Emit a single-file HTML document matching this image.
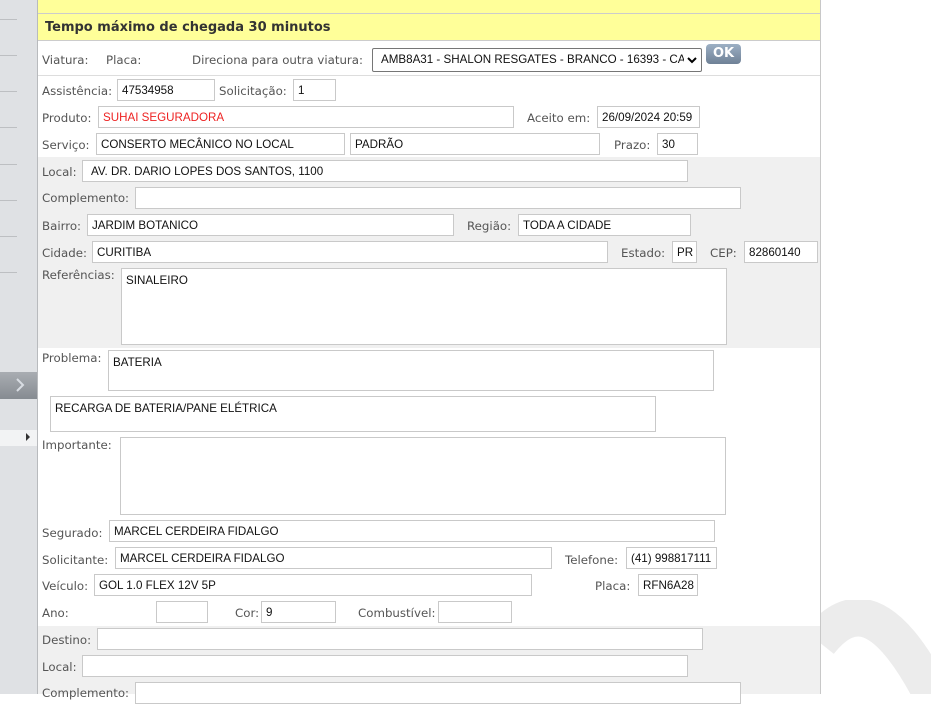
<!DOCTYPE html>
<html><head><meta charset="utf-8"><style>
*{margin:0;padding:0;box-sizing:border-box}
body{width:931px;height:694px;overflow:hidden;background:#fff;position:relative;font-family:"DejaVu Sans",Verdana,sans-serif;font-size:12px;color:#555}
.a{position:absolute}
.l{position:absolute;white-space:nowrap;line-height:14px;margin-top:1px;font-size:11.8px}
.i{position:absolute;background:#fff;border:1px solid #c9c9c9;font-family:"Liberation Sans",Tahoma,sans-serif;font-size:11.6px;color:#111;padding-left:4px;white-space:nowrap;overflow:hidden;height:22px;line-height:22px}
.t{line-height:16px;padding-top:4px}
.sl{position:absolute;left:0;width:17px;height:1px;background:#bdbfc2}
</style></head><body>
<div class="a" style="left:0;top:0;width:37px;height:694px;background:#dfe1e4"></div>
<div class="a" style="left:37px;top:0;width:1px;height:694px;background:#b8babd"></div>
<div class="sl" style="top:19px"></div><div class="sl" style="top:55px"></div><div class="sl" style="top:91px"></div><div class="sl" style="top:127px"></div><div class="sl" style="top:164px"></div><div class="sl" style="top:200px"></div><div class="sl" style="top:236px"></div><div class="sl" style="top:272px"></div>
<div class="a" style="left:0;top:372px;width:37px;height:27px;background:linear-gradient(#a9adb2,#868b91)"></div>
<svg class="a" style="left:14px;top:377px" width="12" height="16"><path d="M3 2 L9 8 L3 14" stroke="#d8dce2" stroke-width="2" fill="none"/></svg>
<div class="a" style="left:0;top:430px;width:37px;height:16px;background:#f2f3f4"></div>
<div class="a" style="left:26px;top:433px;width:0;height:0;border-left:4px solid #333;border-top:4px solid transparent;border-bottom:4px solid transparent"></div>

<div class="a" style="left:820px;top:0;width:1px;height:694px;background:#c8c8c8"></div>
<svg class="a" style="left:821px;top:600px" width="110" height="94"><path d="M-2 42 C30 2 65 5 112 96" stroke="#ececec" stroke-width="38" fill="none"/></svg>

<div class="a" style="left:38px;top:0;width:782px;height:13px;background:#ffff99"></div>
<div class="a" style="left:38px;top:13px;width:782px;height:1px;background:#ccc"></div>
<div class="a" style="left:38px;top:14px;width:782px;height:26px;background:#ffff99"></div>
<div class="l" style="left:45px;top:20px;font-weight:bold;font-size:13px;color:#333">Tempo máximo de chegada 30 minutos</div>
<div class="a" style="left:38px;top:40px;width:782px;height:1px;background:#ccc"></div>
<div class="l" style="left:42px;top:52px">Viatura:</div>
<div class="l" style="left:106px;top:52px">Placa:</div>
<div class="l" style="left:192px;top:52px">Direciona para outra viatura:</div>
<div class="i" style="left:372px;top:48px;width:330px;height:24px;line-height:22px;border-color:#767676;border-radius:2px;padding-left:8px">AMB8A31 - SHALON RESGATES - BRANCO - 16393 - CAI</div>
<div class="a" style="left:684px;top:51px;background:#fff;width:16px;height:18px"></div>
<svg class="a" style="left:686px;top:55px" width="12" height="10"><path d="M2 3 L6 7 L10 3" stroke="#000" stroke-width="2" fill="none"/></svg>
<div class="a" style="left:706px;top:44px;width:35px;height:20px;border-radius:4px;background:linear-gradient(#9cafc4,#6f8196);color:#fff;font-weight:bold;font-size:13px;text-align:center;line-height:20px">OK</div>
<div class="a" style="left:38px;top:75px;width:782px;height:1px;background:#ddd"></div>

<div class="l" style="left:42px;top:83px">Assistência:</div>
<div class="i" style="left:117px;top:79px;width:98px">47534958</div>
<div class="l" style="left:219px;top:83px">Solicitação:</div>
<div class="i" style="left:293px;top:79px;width:43px">1</div>

<div class="l" style="left:42px;top:110px">Produto:</div>
<div class="i" style="left:98px;top:106px;width:416px;color:#e22">SUHAI SEGURADORA</div>
<div class="l" style="left:527px;top:110px">Aceito em:</div>
<div class="i" style="left:597px;top:106px;width:103px">26/09/2024 20:59</div>

<div class="l" style="left:42px;top:137px">Serviço:</div>
<div class="i" style="left:96px;top:133px;width:249px">CONSERTO MECÂNICO NO LOCAL</div>
<div class="i" style="left:350px;top:133px;width:250px">PADRÃO</div>
<div class="l" style="left:614px;top:137px">Prazo:</div>
<div class="i" style="left:657px;top:133px;width:41px">30</div>

<div class="a" style="left:38px;top:157px;width:782px;height:191px;background:#f0f0f0"></div>
<div class="l" style="left:42px;top:164px">Local:</div>
<div class="i" style="left:82px;top:160px;width:606px;padding-left:8px">AV. DR. DARIO LOPES DOS SANTOS, 1100</div>
<div class="l" style="left:42px;top:190px">Complemento:</div>
<div class="i" style="left:135px;top:187px;width:606px"></div>
<div class="l" style="left:42px;top:218px">Bairro:</div>
<div class="i" style="left:87px;top:214px;width:367px">JARDIM BOTANICO</div>
<div class="l" style="left:467px;top:218px">Região:</div>
<div class="i" style="left:518px;top:214px;width:173px">TODA A CIDADE</div>
<div class="l" style="left:42px;top:245px">Cidade:</div>
<div class="i" style="left:92px;top:241px;width:516px">CURITIBA</div>
<div class="l" style="left:621px;top:245px">Estado:</div>
<div class="i" style="left:672px;top:241px;width:25px">PR</div>
<div class="l" style="left:710px;top:245px">CEP:</div>
<div class="i" style="left:744px;top:241px;width:74px">82860140</div>
<div class="l" style="left:42px;top:267px">Referências:</div>
<div class="i t" style="left:121px;top:268px;width:606px;height:77px">SINALEIRO</div>

<div class="l" style="left:42px;top:350px">Problema:</div>
<div class="i t" style="left:108px;top:350px;width:606px;height:41px">BATERIA</div>
<div class="i t" style="left:50px;top:396px;width:606px;height:36px">RECARGA DE BATERIA/PANE ELÉTRICA</div>
<div class="l" style="left:42px;top:437px">Importante:</div>
<div class="i" style="left:120px;top:437px;width:606px;height:78px"></div>

<div class="l" style="left:42px;top:525px">Segurado:</div>
<div class="i" style="left:109px;top:520px;width:606px">MARCEL CERDEIRA FIDALGO</div>
<div class="l" style="left:42px;top:552px">Solicitante:</div>
<div class="i" style="left:115px;top:547px;width:437px">MARCEL CERDEIRA FIDALGO</div>
<div class="l" style="left:565px;top:552px">Telefone:</div>
<div class="i" style="left:626px;top:547px;width:91px">(41) 998817111</div>
<div class="l" style="left:42px;top:578px">Veículo:</div>
<div class="i" style="left:94px;top:574px;width:438px">GOL 1.0 FLEX 12V 5P</div>
<div class="l" style="left:595px;top:578px">Placa:</div>
<div class="i" style="left:638px;top:574px;width:60px">RFN6A28</div>
<div class="l" style="left:42px;top:605px">Ano:</div>
<div class="i" style="left:156px;top:601px;width:52px"></div>
<div class="l" style="left:235px;top:605px">Cor:</div>
<div class="i" style="left:261px;top:601px;width:75px">9</div>
<div class="l" style="left:358px;top:605px">Combustível:</div>
<div class="i" style="left:438px;top:601px;width:74px"></div>

<div class="a" style="left:38px;top:626px;width:782px;height:68px;background:#f0f0f0"></div>
<div class="l" style="left:42px;top:632px">Destino:</div>
<div class="i" style="left:97px;top:628px;width:606px"></div>
<div class="l" style="left:42px;top:659px">Local:</div>
<div class="i" style="left:82px;top:655px;width:606px"></div>
<div class="l" style="left:42px;top:685px">Complemento:</div>
<div class="i" style="left:135px;top:682px;width:606px"></div>
</body></html>
